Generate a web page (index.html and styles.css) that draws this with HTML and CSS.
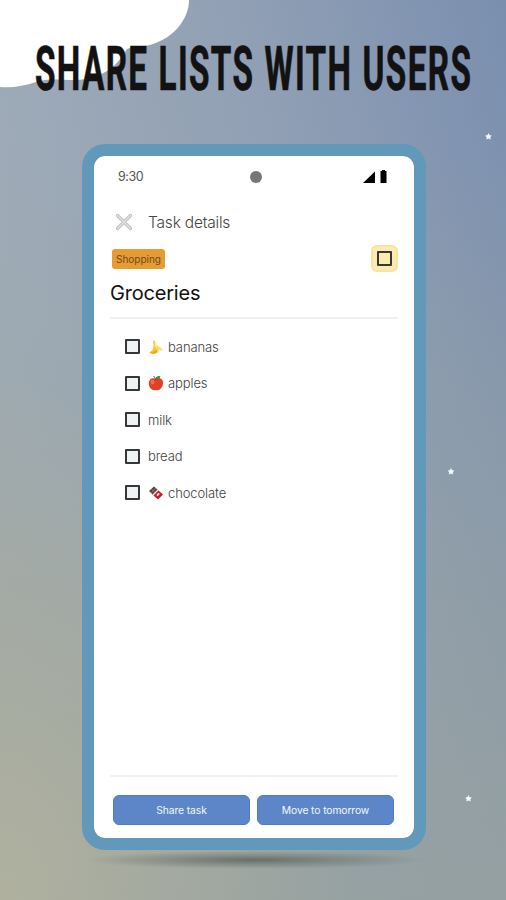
FILE: index.html
```
<!DOCTYPE html>
<html lang="en">
<head>
    <meta charset="UTF-8">
    <meta name="viewport" content="width=device-width, initial-scale=1.0">
    <title>Share lists with users</title>
    <link rel="stylesheet" href="styles.css">
</head>
<body>
    <div class="promo">
        <!-- Background shapes -->
        <svg class="scenery" viewBox="0 0 506 900">
            <defs>
                <path id="star" d="M0 -3.4 L1.1 -1.3 L3.4 -1 L1.8 .7 L2.2 3 L0 2 L-2.2 3 L-1.8 .7 L-3.4 -1 L-1.1 -1.3 Z"/>
            </defs>
            <path fill="#fff" d="M0 0 H189 C189 20 172 41 145 46 C138 47 132 47 127 49 C116 68 101 79 75 80 C60 80 48 78 36 82 C24 86 13 88 0 87 Z"/>
            <g fill="#f3f9ff">
                <use href="#star" x="488.500" y="136.500"/>
                <use href="#star" x="451" y="471.500"/>
                <use href="#star" x="468.500" y="798.500"/>
            </g>
        </svg>

        <h1 class="headline"><span>SHARE LISTS WITH USERS</span></h1>

        <div class="phone">
            <div class="status-bar">
                <span class="time">9:30</span>
                <span class="camera"></span>
                <svg class="status-icons" width="26" height="14" viewBox="0 0 26 14">
                    <path d="M0 13 L12 1.500 V13 Z"/>
                    <path d="M17.500 1 H19 V0 H22 V1 H23.500 V13 H17.500 Z"/>
                </svg>
            </div>

            <div class="app-bar">
                <svg width="18" height="18" viewBox="0 0 18 18">
                    <path class="close-edge" d="M2.500 2.500 L15.500 15.500 M15.500 2.500 L2.500 15.500"/>
                    <path class="close-fill" d="M2.500 2.500 L15.500 15.500 M15.500 2.500 L2.500 15.500"/>
                </svg>
                <span class="app-title">Task details</span>
            </div>

            <div class="tag-row">
                <span class="tag">Shopping</span>
                <span class="task-check"><span class="box"></span></span>
            </div>
            <h2 class="task-title">Groceries</h2>

            <!-- Items -->
            <ul class="items">
                <li>
                    <span class="box"></span>
                    <svg class="emoji" width="16" height="16" viewBox="0 0 16 16">
                        <path fill="#ffca38" d="M5 2 L7 1.500 C7 5 8 7.500 11.500 9 L9.500 13.500 C6 15.500 2.500 15 1.500 13 C4.500 12 6.500 9 5 2 Z"/>
                        <path fill="#fff0b2" d="M6.800 2 C9 4 10 6.500 10 9.500 L7.500 8 Z"/>
                        <path fill="#ffdc65" d="M8 7 C11 6.500 14 9 15 12 L11 10.500 L10.500 13.500 L8.500 11 Z"/>
                        <path fill="#f1a62a" d="M1.500 13 C4.500 13.500 7 12 8.500 10 L9.500 13.500 C6 15.500 2.500 15 1.500 13 Z"/>
                    </svg>
                    <span class="name">bananas</span>
                </li>
                <li>
                    <span class="box"></span>
                    <svg class="emoji" width="16" height="16" viewBox="0 0 16 16">
                        <path fill="#e23f27" d="M7.500 4 C11 1.500 15.500 4 15 8.500 C14.500 13 11.500 16 8 15 C4 16 .8 12.500 .8 8.500 C.8 4.500 4 2 7.500 4 Z"/>
                        <ellipse cx="4.500" cy="7" rx="2" ry="2.500" fill="#f6694a"/>
                        <path fill="#468a39" d="M7.500 4.500 C7 2 9.500 .5 12.500 1 C12 3.500 10 4.500 7.500 4.500 Z"/>
                        <path fill="none" stroke="#6d402b" d="M5.500 1 C6.500 2 7.300 3 7.500 5"/>
                    </svg>
                    <span class="name">apples</span>
                </li>
                <li>
                    <span class="box"></span>
                    <span class="name">milk</span>
                </li>
                <li>
                    <span class="box"></span>
                    <span class="name">bread</span>
                </li>
                <li>
                    <span class="box"></span>
                    <svg class="emoji" width="16" height="16" viewBox="0 0 16 16">
                        <path fill="#60413c" d="M1 6 L6 1.500 L10 5 L5 10 Z"/>
                        <path stroke="#a98680" stroke-width=".6" d="M3.500 4 L7.500 7.500 M3 8 L8 3"/>
                        <path fill="#e8dedc" d="M4.500 9.500 L9.500 4.500 L10.800 5.500 L5.800 10.800 Z"/>
                        <path fill="#bd202c" d="M5.500 10.500 L10.500 5.500 L15 9.500 L10 14.500 Z"/>
                        <path fill="#f0e8e6" d="M8.300 10 L10.500 7.800 L11.800 9 L9.600 11.200 Z"/>
                    </svg>
                    <span class="name">chocolate</span>
                </li>
            </ul>

            <div class="actions">
                <button class="share-button">Share task</button>
                <button class="move-button">Move to tomorrow</button>
            </div>
        </div>
        <div class="shadow"></div>
    </div>
</body>
</html>
```

FILE: styles.css
```
* {
    box-sizing: border-box;
}

body {
    margin: 0;
    font-family: Inter, "Liberation Sans", sans-serif;
}

.promo {
    position: relative;
    width: 506px;
    height: 900px;
    overflow: hidden;
    background:
        radial-gradient(ellipse 360px 520px at 0 900px, rgba(178, 178, 158, 0.9), rgba(172, 175, 160, 0) 100%),
        linear-gradient(to bottom, rgba(149, 160, 158, 0) 15%, rgba(149, 160, 158, 0.85) 100%),
        linear-gradient(75deg, #a6b0b5 0%, #a0acb8 22%, #909fb4 65%, #7a8faf 100%);
}

.scenery {
    position: absolute;
    top: 0;
    left: 0;
    width: 506px;
    height: 900px;
}

.headline {
    position: relative;
    margin: 0;
    height: 144px;
    padding: 33px 0 0 35px;
    font-family: Roboto, sans-serif;
    font-size: 61px;
    font-weight: 700;
    line-height: 72px;
    color: #121212;
    white-space: nowrap;
}

/* squeezed to get a condensed poster face */
.headline span {
    display: inline-block;
    letter-spacing: 2.5px;
    word-spacing: 1px;
    transform: scaleX(0.545);
    transform-origin: left center;
    -webkit-text-stroke: 0.7px #121212;
}

.phone {
    position: relative;
    display: flex;
    flex-direction: column;
    width: 344px;
    height: 706px;
    margin-left: 82px;
    padding: 0 16px 0 16px;
    background: #fff;
    background-clip: padding-box;
    border: 12px solid #6298b9;
    border-radius: 23px;
}

.status-bar {
    display: flex;
    justify-content: space-between;
    align-items: center;
    height: 41px;
    padding: 0 9px 0 8px;
}

.time {
    width: 26px;
    font-size: 12.5px;
    letter-spacing: -0.4px;
    color: #555;
}

.camera {
    width: 12px;
    height: 12px;
    margin-left: 4px;
    border-radius: 50%;
    background: #777;
}

.app-bar {
    display: flex;
    align-items: center;
    gap: 15px;
    height: 48px;
    padding: 2px 0 0 5px;
}

.app-bar path {
    fill: none;
    stroke-linecap: round;
}

.close-edge {
    stroke: #bdbdbd;
    stroke-width: 3.2;
}

.close-fill {
    stroke: #e2e2e2;
    stroke-width: 1.4;
}

.app-title {
    font-size: 15.5px;
    font-weight: 300;
    letter-spacing: -0.2px;
    color: #444;
}

.tag-row {
    display: flex;
    justify-content: space-between;
    align-items: center;
    height: 27px;
    padding-left: 2px;
}

.tag {
    width: 53px;
    height: 20px;
    border-radius: 3px;
    background: #e59c34;
    color: #704a19;
    font-size: 10px;
    line-height: 20px;
    text-align: center;
}

.task-check {
    display: flex;
    justify-content: center;
    align-items: center;
    width: 27px;
    height: 27px;
    border: 2px solid #f6e4a0;
    border-radius: 6px;
    background: #fbebb0;
}

.box {
    flex: none;
    width: 15px;
    height: 15px;
    border: 2px solid #353838;
    border-radius: 1px;
    background: #eff3f3;
}

.task-check .box {
    background: #fbebb0;
}

.task-title {
    height: 47px;
    margin: 0;
    border-bottom: 2px solid #f1f1f1;
    font-size: 20px;
    font-weight: 400;
    letter-spacing: -0.2px;
    line-height: 43px;
    color: #111;
}

.items {
    flex: 1;
    margin: 0;
    padding: 9.5px 0 0 15px;
    list-style: none;
}

.items li {
    display: flex;
    align-items: center;
    height: 36.5px;
}

.items .box {
    margin-right: 8px;
}

.emoji {
    margin-right: 4px;
}

.name {
    font-size: 13px;
    font-weight: 300;
    letter-spacing: -0.1px;
    color: #404040;
}

.actions {
    display: flex;
    gap: 7px;
    height: 63px;
    padding: 18px 4px 0 3px;
    border-top: 2px solid #f1f1f1;
}

.actions button {
    flex: 1;
    height: 30px;
    padding: 0;
    border: 1px solid #4f7cc4;
    border-radius: 6px;
    background: #5c86c8;
    color: #f3f7ff;
    font-family: inherit;
    font-size: 10.3px;
    letter-spacing: -0.1px;
}

.shadow {
    width: 340px;
    height: 18px;
    margin: 1px 0 0 84px;
    background: radial-gradient(ellipse closest-side, rgba(80, 88, 82, 0.7), rgba(95, 103, 96, 0.4) 50%, rgba(115, 123, 115, 0) 100%);
}
```
